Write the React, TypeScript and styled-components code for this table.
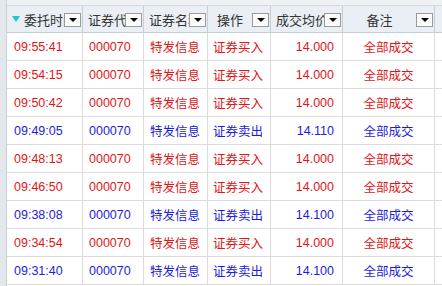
import * as React from 'react';
import styled, { createGlobalStyle } from 'styled-components';

const GlobalStyle = createGlobalStyle`
  html, body {
    margin: 0;
    padding: 0;
    background: #eef2f5;
    font-family: "Liberation Sans", "Noto Sans CJK SC", sans-serif;
  }
`;

const COLS = '76px 61px 64px 63px 72px 92px';

const Page = styled.div`
  display: flex;
  width: 442px;
  height: 286px;
  overflow: hidden;
`;

const SideStrip = styled.div`
  width: 6px;
  flex: none;
  background: #e3e8ec;
  border-right: 1px solid #c9d0d6;
`;

const Main = styled.div`
  flex: 1;
  display: flex;
  flex-direction: column;
  padding-top: 5px;
`;

const HeaderRow = styled.div`
  display: grid;
  grid-template-columns: ${COLS};
  height: 26px;
  background: #e9eff4;
  border-top: 1px solid #d4dbe1;
  border-bottom: 1px solid #c6ced5;
`;

const HeaderCell = styled.div<{ align: 'left' | 'center' }>`
  position: relative;
  display: flex;
  align-items: center;
  justify-content: ${p => (p.align === 'center' ? 'center' : 'flex-start')};
  padding: 0 18px 0 ${p => (p.align === 'center' ? '0' : '5px')};
  border-right: 1px solid #c6ced5;
  font-size: 13px;
  color: #333;
  white-space: nowrap;
  overflow: hidden;
`;

const SortMark = styled.span`
  width: 0;
  height: 0;
  border-left: 4px solid transparent;
  border-right: 4px solid transparent;
  border-top: 6px solid #19c6d8;
  margin-right: 4px;
  flex: none;
`;

const DropButton = styled.span`
  position: absolute;
  right: 1px;
  top: 7px;
  width: 15px;
  height: 12px;
  background: #fafafa;
  border: 1px solid #9a9a9a;
  display: flex;
  align-items: center;
  justify-content: center;
  &::after {
    content: '';
    width: 0;
    height: 0;
    border-left: 4px solid transparent;
    border-right: 4px solid transparent;
    border-top: 4px solid #000;
  }
`;

const Row = styled.div<{ tone: 'buy' | 'sell' }>`
  display: grid;
  grid-template-columns: ${COLS};
  height: 27px;
  background: #fff;
  border-bottom: 1px solid #dcdcdc;
  color: ${p => (p.tone === 'buy' ? '#e01616' : '#1c1ce0')};
  font-size: 12.5px;
`;

const Cell = styled.div<{ align: 'left' | 'right' | 'center'; pad?: number }>`
  display: flex;
  align-items: center;
  justify-content: ${p =>
    p.align === 'right' ? 'flex-end' : p.align === 'center' ? 'center' : 'flex-start'};
  padding: 0 ${p => (p.align === 'right' ? 8 : 0)}px 0 ${p => p.pad ?? 6}px;
  border-right: 1px solid #dcdcdc;
  white-space: nowrap;
`;

const Filler = styled.div`
  flex: 1;
  background: #fff;
`;

interface Trade {
  time: string;
  price: string;
  sell: boolean;
}

const trades: Trade[] = [
  { time: '09:55:41', price: '14.000', sell: false },
  { time: '09:54:15', price: '14.000', sell: false },
  { time: '09:50:42', price: '14.000', sell: false },
  { time: '09:49:05', price: '14.110', sell: true },
  { time: '09:48:13', price: '14.000', sell: false },
  { time: '09:46:50', price: '14.000', sell: false },
  { time: '09:38:08', price: '14.100', sell: true },
  { time: '09:34:54', price: '14.000', sell: false },
  { time: '09:31:40', price: '14.100', sell: true },
];

const headers: { label: string; align: 'left' | 'center'; sorted?: boolean }[] = [
  { label: '委托时间', align: 'left', sorted: true },
  { label: '证券代码', align: 'left' },
  { label: '证券名称', align: 'left' },
  { label: '操作', align: 'center' },
  { label: '成交均价', align: 'left' },
  { label: '备注', align: 'center' },
];

const App: React.FC = () => {
  return (
    <Page>
      <GlobalStyle />
      <SideStrip />
      <Main>
        <HeaderRow>
          {headers.map(h => (
            <HeaderCell key={h.label} align={h.align}>
              {h.sorted && <SortMark />}
              {h.label}
              <DropButton />
            </HeaderCell>
          ))}
        </HeaderRow>
        {trades.map(t => (
          <Row key={t.time} tone={t.sell ? 'sell' : 'buy'}>
            <Cell align="left" pad={7}>{t.time}</Cell>
            <Cell align="left" pad={6}>000070</Cell>
            <Cell align="left" pad={6}>特发信息</Cell>
            <Cell align="left" pad={5}>{t.sell ? '证券卖出' : '证券买入'}</Cell>
            <Cell align="right">{t.price}</Cell>
            <Cell align="center" pad={0}>全部成交</Cell>
          </Row>
        ))}
        <Filler />
      </Main>
    </Page>
  );
};

export default App;
